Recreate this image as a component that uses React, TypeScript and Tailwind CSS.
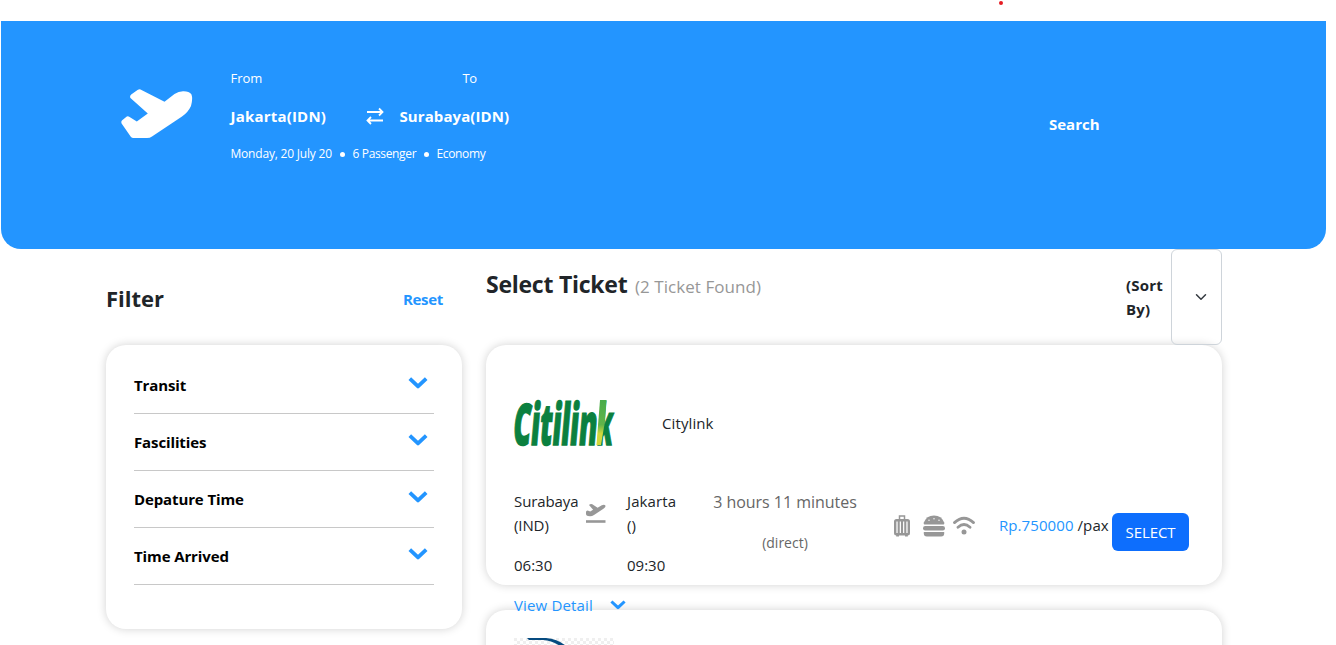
import React from "react";

function Chevron({ className }: { className: string }) {
  return (
    <svg className={className} viewBox="0 0 20 12" fill="none" stroke="#2395ff" strokeWidth="3.8" strokeLinejoin="round">
      <path d="M1.8 1.6 L10 9.4 L18.2 1.6" />
    </svg>
  );
}

function Plane({ className }: { className: string }) {
  return (
    <svg className={className} viewBox="0 0 72 50" fill="currentColor">
      <path d="M19.5 .4Q18 .1 16.5 1L10.2 5.4Q8.8 6.5 9.2 8.4Q9.3 9 10 9.6L26.8 24.4L15.8 32.4L8.2 27.7Q7 27 5.8 27.6L1.2 31.2Q-.2 32.4 .6 34.5L9.8 47.7Q10.8 49 12.5 49H26Q29 49 31 47.5L61 27.5Q67 23.5 70 17Q72 10 70.5 5.5Q68 2 62 2.2Q57.5 2.5 53.5 5L43.5 12.7Z" />
    </svg>
  );
}

function Takeoff() {
  return (
    <svg className="mt-[15px] ml-[7px] h-[20px] w-[20px] shrink-0" viewBox="0 0 20 20" fill="#979797">
      <path d="M3 .9Q4.5-.3 6.3 .3L11.6 3.7 15.8 1.2Q18.3 .1 19.2 1.3Q20.2 2.8 17.8 4.4L8 10.9Q5.9 12.4 4 12.3L2 12.1Q.4 12 0 10.3Q-.2 7.8 .4 7.1Q1.2 6.2 3 7L4.2 7.6 7.1 5.7Z" />
      <path d="M0 16.2H19.5V18.8H0Z" />
    </svg>
  );
}

function Luggage() {
  return (
    <svg className="h-[22px] w-[16px]" viewBox="0 0 16 22" fill="none" stroke="#979797">
      <path d="M5.5 5V1H10.5V5" strokeWidth="1.5" />
      <rect x="1.2" y="5.2" width="13.6" height="14" rx="1.3" strokeWidth="2.4" />
      <path d="M4.7 5V19M8 5V19M11.3 5V19" strokeWidth="2.1" />
      <path d="M2.2 20.7H5M11 20.7H13.8" strokeWidth="1.6" />
    </svg>
  );
}

function Burger() {
  return (
    <svg className="h-[22px] w-[22px]" viewBox="0 0 22 22" fill="#979797">
      <path d="M1.3 9.4Q.3 9.2 .8 7.5Q3.4 .5 11 .5Q18.6 .5 21.2 7.5Q21.7 9.2 20.7 9.4Z" />
      <rect x="0" y="11" width="22" height="4.4" rx="2.2" />
      <path d="M.8 17H21.2V18.5Q21.2 21.5 18.2 21.5H3.8Q.8 21.5 .8 18.5Z" />
      <g fill="#fff">
        <circle cx="6" cy="5.2" r=".7" />
        <circle cx="11" cy="3.7" r=".7" />
        <circle cx="16" cy="5.2" r=".7" />
      </g>
    </svg>
  );
}

function Wifi() {
  return (
    <svg className="h-[20px] w-[22px]" viewBox="0 0 22 20" fill="none" stroke="#979797" strokeWidth="2.8" strokeLinecap="round">
      <path d="M1.5 6.6Q11-2.2 20.5 6.6M5 11.2Q11 5.8 17 11.2" />
      <circle cx="11" cy="16" r="2.5" fill="#979797" stroke="none" />
    </svg>
  );
}

function CitilinkLogo() {
  return (
    <svg className="h-[48px] w-[102px] overflow-visible" viewBox="0 0 102 48">
      <defs>
        <linearGradient id="leaf" x1="0" y1="0" x2="0" y2="1">
          <stop offset="0" stopColor="#48ac4b" />
          <stop offset=".55" stopColor="#62b44a" />
          <stop offset=".75" stopColor="#d2d83c" />
        </linearGradient>
      </defs>
      <g fontFamily="Open Sans, sans-serif" fontWeight="800" fill="#0b803f" stroke="#0b803f" strokeWidth="1.5" transform="translate(-2 45.5) skewX(-5)">
        <text x="0" y="0" fontSize="57.5" textLength="84" lengthAdjust="spacingAndGlyphs">Citilin</text>
        <text x="84" y="0" fontSize="57.5" textLength="15.5" lengthAdjust="spacingAndGlyphs">k</text>
      </g>
      <path d="M86 1H92.5L91 22 87 46H82.5Z" fill="url(#leaf)" />
    </svg>
  );
}

const filters = ["Transit", "Fascilities", "Depature Time", "Time Arrived"];

export default function App() {
  return (
    <div className="h-[645px] w-[1336px] overflow-hidden bg-white font-['Open_Sans',sans-serif] text-[15px] leading-6 text-[#212529]">
      <div className="flex h-[21px] pt-px pl-[999px]">
        <span className="h-[4px] w-[4px] rounded-full bg-[#e51c23]" />
      </div>
      <header className="ml-px flex h-[228px] w-[1325px] rounded-b-[20px] bg-[#2395ff] text-white">
        <Plane className="mt-[68px] ml-[120px] h-[50px] w-[72px]" />
        <div className="ml-[37.5px] w-[300.5px]">
          <div className="mt-[46px] flex text-[13px] leading-[22px]">
            <span className="w-[232px]">From</span>
            <span className="tracking-[-0.5px]">To</span>
          </div>
          <div className="mt-[15px] flex items-center text-[15px] leading-6 font-bold whitespace-nowrap">
            <span className="w-[135px] tracking-[0.2px]">Jakarta(IDN)</span>
            <svg className="mr-[16px] h-[18px] w-[18px] shrink-0" viewBox="0 0 18 18" fill="none" stroke="currentColor" strokeWidth="1.8">
              <path d="M1 5H16M13 1.5 16.5 5 13 8.5M17 13.5H2M5 10 1.5 13.5 5 17" />
            </svg>
            <span className="tracking-[0.08px]">Surabaya(IDN)</span>
          </div>
          <div className="mt-[16px] flex items-center text-[12px] leading-[20px] whitespace-nowrap">
            <span className="w-[102px] tracking-[-0.2px]">Monday, 20 July 20</span>
            <i className="mr-[8px] ml-[7px] h-[5px] w-[5px] rounded-full bg-white" />
            <span className="w-[64px] tracking-[-0.35px]">6 Passenger</span>
            <i className="mx-[7.5px] h-[5px] w-[5px] rounded-full bg-white" />
            <span className="tracking-[-0.35px]">Economy</span>
          </div>
        </div>
        <span className="mt-[91px] ml-[518px] text-[15px] font-bold">Search</span>
      </header>

      <main className="flex pl-[106px]">
        <aside className="w-[356px]">
          <div className="flex h-[96px] items-start justify-between pt-[33px] pr-[19px]">
            <h2 className="text-[22px] leading-8 font-bold">Filter</h2>
            <a className="pt-[5px] text-[15px] font-bold tracking-[-0.3px] text-[#2395ff]">Reset</a>
          </div>
          <div className="h-[284px] rounded-[20px] bg-white px-[28px] pt-[12px] shadow-[0_0_10px_rgba(0,0,0,0.18)]">
            {filters.map((name) => (
              <div key={name} className="flex h-[57px] items-start justify-between border-b border-[#c8c8c8] pt-[16px] pr-[6px] font-bold text-black">
                <span className="text-[15px] tracking-[-0.12px]">{name}</span>
                <Chevron className="mt-[4px] h-[12px] w-[20px]" />
              </div>
            ))}
          </div>
        </aside>

        <section className="ml-[24px] w-[736px]">
          <div className="flex h-[96px]">
            <h2 className="mt-[19px] w-[149px] text-[23px] leading-8 font-bold tracking-[-0.25px] whitespace-nowrap">Select Ticket</h2>
            <span className="mt-[26px] text-[17px] tracking-[0.05px] whitespace-nowrap text-[#979797]">(2 Ticket Found)</span>
            <span className="mt-[24px] ml-auto w-[45px] text-[15px] font-bold tracking-[0.2px]">(Sort By)</span>
            <div className="flex w-[51px] items-center justify-center rounded-[6px] border border-[#ced4da] pl-[9px]">
              <svg className="h-[12px] w-[12px]" viewBox="0 0 16 16" fill="none" stroke="#343a40" strokeWidth="2" strokeLinecap="round" strokeLinejoin="round">
                <path d="m2 5 6 6 6-6" />
              </svg>
            </div>
          </div>

          <article className="h-[240px] rounded-[20px] bg-white px-[28px] pt-[54px] shadow-[0_0_10px_rgba(0,0,0,0.18)]">
            <div className="flex h-[90px]">
              <CitilinkLogo />
              <span className="mt-[12px] ml-[46px] tracking-[0.1px]">Citylink</span>
            </div>
            <div className="flex h-[104px] whitespace-nowrap">
              <div className="w-[65px]">
                <p className="tracking-[-0.1px]">Surabaya<br />(IND)</p>
                <p className="mt-[16px]">06:30</p>
              </div>
              <Takeoff />
              <div className="ml-[21px] w-[86px]">
                <p className="tracking-[0.1px]">Jakarta<br />()</p>
                <p className="mt-[16px]">09:30</p>
              </div>
              <div className="w-[144px] text-center text-[#666]">
                <p className="mt-px text-[16px] tracking-[-0.03px]">3 hours 11 minutes</p>
                <p className="mt-[17px] text-[14px]">(direct)</p>
              </div>
              <div className="mt-[26px] ml-[37px] flex h-[22px] items-start">
                <Luggage />
                <div className="ml-[13px]"><Burger /></div>
                <div className="ml-[8px] pt-px"><Wifi /></div>
              </div>
              <div className="mt-[24px] ml-[24px] w-[113px] tracking-[0.08px]">
                <span className="text-[#2395ff]">Rp.750000</span> /pax
              </div>
              <button className="mt-[24px] h-[38px] w-[77px] shrink-0 rounded-[6px] bg-[#0d6efd] text-[15px] tracking-[-0.1px] text-white">SELECT</button>
            </div>
            <div className="flex items-center text-[#2395ff]">
              <span className="w-[96px] tracking-[0.15px]">View Detail</span>
              <Chevron className="h-[10px] w-[16px]" />
            </div>
          </article>

          <article className="mt-[25px] h-[240px] rounded-[20px] bg-white px-[28px] pt-[28px] shadow-[0_0_10px_rgba(0,0,0,0.18)]">
            <svg className="h-[60px] w-[100px]" viewBox="0 0 100 60">
              <defs>
                <pattern id="check" width="6" height="6" patternUnits="userSpaceOnUse">
                  <path d="M0 0H3V3H0ZM3 3H6V6H3Z" fill="#efefef" />
                </pattern>
              </defs>
              <path d="M0 0H100V60H0Z" fill="url(#check)" />
              <path d="M13 0H32Q44 1 52 8H46Q38 2.5 29 2H15Z" fill="#064b80" />
            </svg>
          </article>
        </section>
      </main>
    </div>
  );
}
